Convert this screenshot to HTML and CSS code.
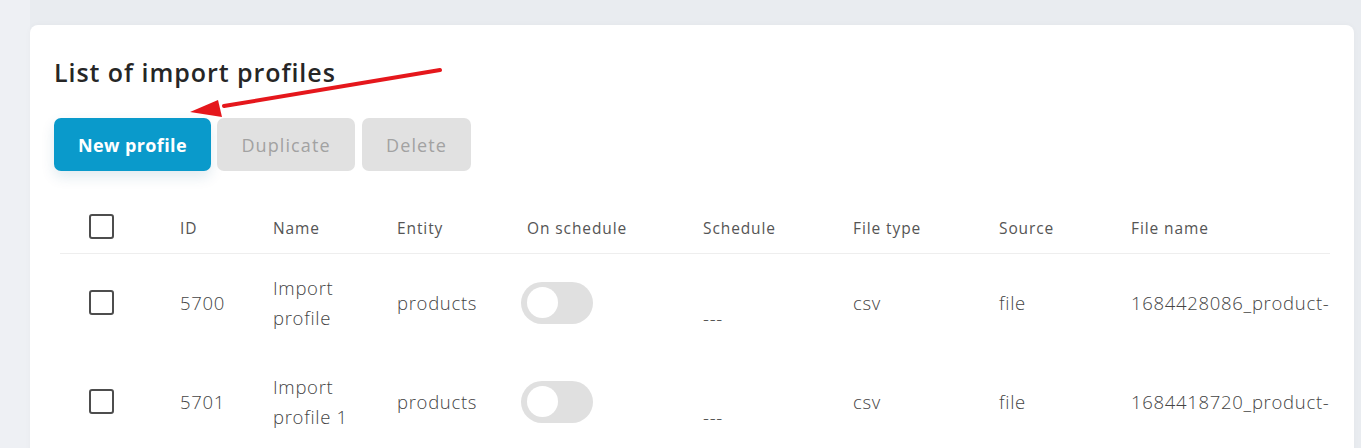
FILE: index.html
```html
<!DOCTYPE html>
<html lang="en">
<head>
<meta charset="utf-8">
<title>List of import profiles</title>
<link rel="stylesheet" href="styles.css">
</head>
<body>
<div class="page">
  <section class="card">
    <h1 class="title">List of import profiles</h1>
    <div class="actions">
      <button class="btn btn-primary">New profile</button>
      <button class="btn btn-disabled">Duplicate</button>
      <button class="btn btn-disabled">Delete</button>
    </div>
    <svg class="arrow" width="280" height="70" viewBox="0 0 280 70">
      <line x1="256" y1="12" x2="40" y2="48" stroke="#e5171c" stroke-width="4" stroke-linecap="round"/>
      <polygon points="6,54 34,42 38,59" fill="#e5171c"/>
    </svg>
    <div class="table-wrap">
      <table class="grid">
        <colgroup>
          <col class="c-check"><col class="c-id"><col class="c-name"><col class="c-entity"><col class="c-on"><col class="c-sched"><col class="c-type"><col class="c-src"><col class="c-file">
        </colgroup>
        <thead>
          <tr>
            <th class="check-cell"><span class="checkbox"></span></th>
            <th>ID</th>
            <th>Name</th>
            <th>Entity</th>
            <th>On schedule</th>
            <th>Schedule</th>
            <th>File type</th>
            <th>Source</th>
            <th>File name</th>
          </tr>
        </thead>
        <tbody>
          <tr>
            <td class="check-cell"><span class="checkbox"></span></td>
            <td>5700</td>
            <td class="name">Import profile</td>
            <td>products</td>
            <td><span class="toggle"><span class="knob"></span></span></td>
            <td><span class="dash">---</span></td>
            <td>csv</td>
            <td>file</td>
            <td class="file">1684428086_product-export.csv</td>
          </tr>
          <tr>
            <td class="check-cell"><span class="checkbox"></span></td>
            <td>5701</td>
            <td class="name">Import profile 1</td>
            <td>products</td>
            <td><span class="toggle"><span class="knob"></span></span></td>
            <td><span class="dash">---</span></td>
            <td>csv</td>
            <td>file</td>
            <td class="file">1684418720_product-export.csv</td>
          </tr>
        </tbody>
      </table>
    </div>
  </section>
</div>
</body>
</html>
```

FILE: styles.css
```css
* { box-sizing: border-box; }
html, body { margin: 0; padding: 0; }
body {
  background: #e9ecf0;
  font-family: "Open Sans", "Noto Sans", sans-serif;
  color: #555;
  overflow: hidden;
}
.page {
  padding: 25px 7px 0 30px;
  height: 448px;
  background: linear-gradient(to right, #eef0f4 0, #eef0f4 30px, #e9ecf0 30px);
}
.card {
  position: relative;
  background: #fff;
  border-radius: 8px 8px 0 0;
  padding: 29px 24px 0 24px;
  height: 500px;
  box-shadow: 0 0 6px rgba(0,0,0,0.03);
}
.title {
  margin: 0;
  font-size: 25px;
  font-weight: 600;
  color: #262626;
  line-height: 36px;
  letter-spacing: 0.95px;
}
.actions {
  display: flex;
  gap: 6px;
  margin-top: 28px;
}
.btn {
  height: 53px;
  border: none;
  border-radius: 7px;
  font-family: inherit;
  font-size: 18px;
  padding: 0;
}
.btn-primary {
  width: 157px;
  background: #0a9acb;
  color: #fff;
  font-weight: 700;
  letter-spacing: 0.4px;
  box-shadow: 0 6px 14px rgba(10,80,120,0.12);
}
.btn-disabled {
  background: #e1e1e1;
  color: #a2a2a2;
  font-weight: 500;
  letter-spacing: 1.1px;
}
.btn-disabled:nth-child(2) { width: 138px; }
.btn-disabled:nth-child(3) { width: 109px; margin-left: 1px; }
.arrow {
  position: absolute;
  left: 154px;
  top: 33px;
}
.table-wrap {
  margin: 29px 0 0 6px;
  overflow: hidden;
}
.grid {
  border-collapse: collapse;
  table-layout: fixed;
  width: 1400px;
}
.c-check { width: 120px; }
.c-id { width: 93px; }
.c-name { width: 124px; }
.c-entity { width: 130px; }
.c-on { width: 176px; }
.c-sched { width: 150px; }
.c-type { width: 146px; }
.c-src { width: 132px; }
.c-file { width: 329px; }
th {
  text-align: left;
  font-weight: 400;
  font-size: 15.5px;
  color: #555;
  height: 53px;
  padding: 3px 0 0 0;
  border-bottom: 1px solid #eeeeee;
  vertical-align: middle;
  letter-spacing: 0.9px;
}
th.check-cell { padding-top: 0; }
td {
  font-size: 18.5px;
  font-weight: 300;
  color: #444;
  height: 99px;
  padding: 0;
  vertical-align: middle;
  line-height: 30px;
  letter-spacing: 0.7px;
}
.check-cell { padding-left: 29px; }
.checkbox {
  display: block;
  width: 25px;
  height: 25px;
  border: 2.5px solid #4d4d4d;
  border-radius: 3px;
}
.name { padding-right: 22px; }
.file { white-space: nowrap; }
.toggle {
  display: block;
  width: 72px;
  height: 42px;
  border-radius: 21px;
  background: #e0e0e0;
  margin-left: -6px;
  padding: 5px 0 0 6px;
}
.knob {
  display: block;
  width: 31px;
  height: 31px;
  border-radius: 50%;
  background: #fff;
}
.dash {
  display: block;
  padding-top: 30px;
}
```
